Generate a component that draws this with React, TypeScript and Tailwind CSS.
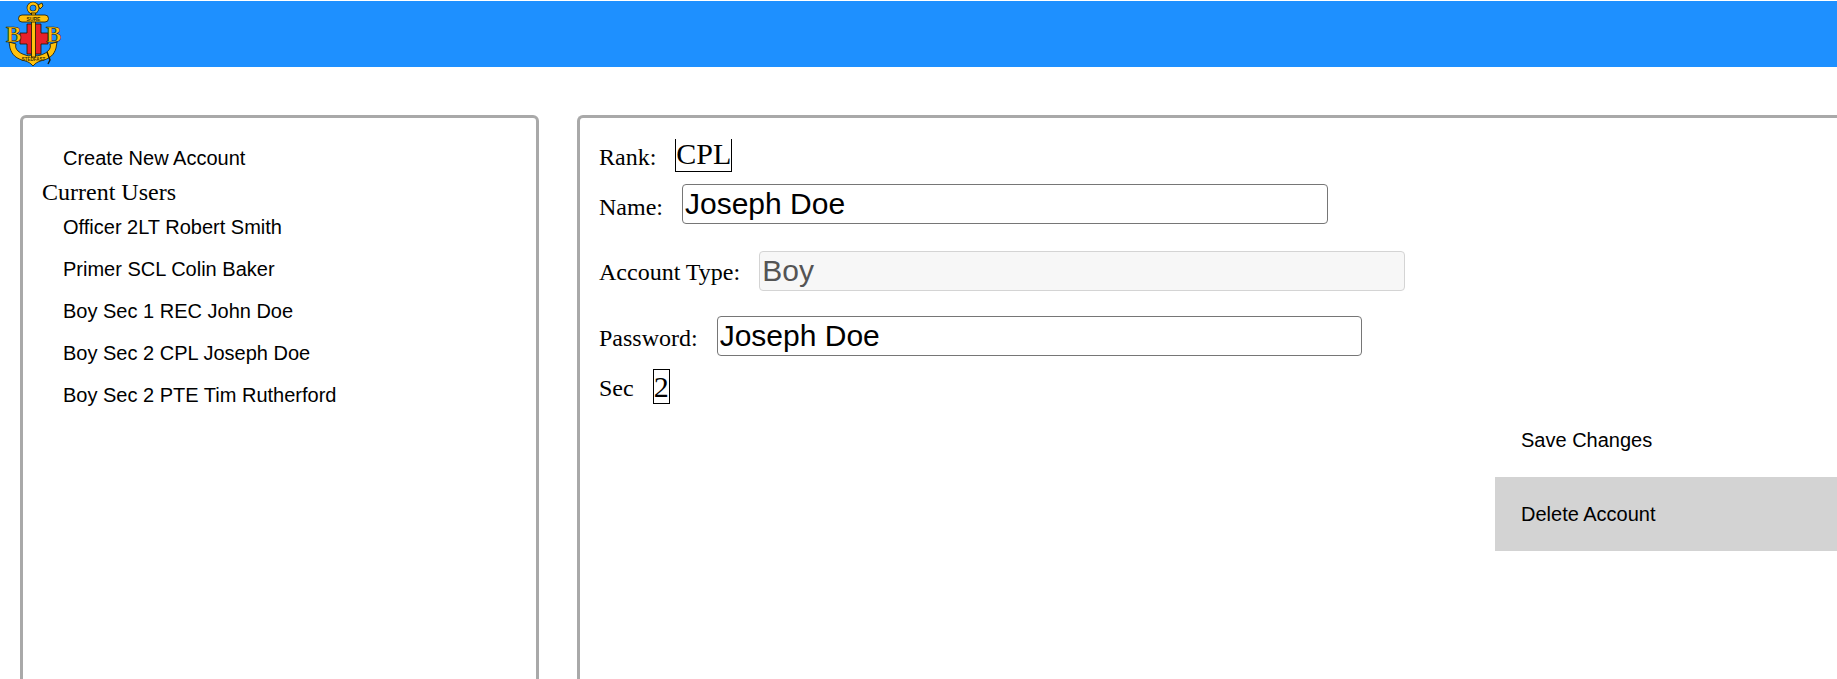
const users = [
  "Officer 2LT Robert Smith",
  "Primer SCL Colin Baker",
  "Boy Sec 1 REC John Doe",
  "Boy Sec 2 CPL Joseph Doe",
  "Boy Sec 2 PTE Tim Rutherford",
];

function Logo() {
  return (
    <svg viewBox="0 0 68 66" className="h-[66px] w-[68px] shrink-0">
      <g stroke="#1a1400" strokeWidth="0.8">
        <circle cx="33" cy="7" r="4.5" fill="none" stroke="#1a1400" strokeWidth="3.6" />
        <circle cx="33" cy="7" r="4.5" fill="none" stroke="#ffc20e" strokeWidth="2.4" />
        <path d="M38 4l4-2 1 3-3 3z" fill="#ffc20e" />
        <path d="M9 41l7 2c-1 3 0 5 2 7 3 3 7 4 11 5l4-2 4 2c4-1 8-2 11-5 2-2 3-4 2-7l7-2-1 6c-2 7-6 10-12 12-4 1-7 2-9 4l-2 2-2-2c-2-2-5-3-9-4-6-2-10-5-12-12z" fill="#ffc20e" />
        <path d="M27 23h14v9h7v11h-7v10H27V43h-7V32h7z" fill="#e8202a" />
        <rect x="31.5" y="12" width="4" height="44" fill="#ffc20e" />
        <rect x="18.5" y="14" width="30" height="7" rx="3.5" fill="#ffc20e" />
        <path d="M47 51l3 8-2 4" fill="none" strokeWidth="1.4" />
      </g>
      <text x="33.5" y="19.5" textAnchor="middle" fontFamily="Liberation Sans, sans-serif" fontWeight="700" fontSize="5" fill="#3a2a00">SURE</text>
      <text x="33.5" y="60" textAnchor="middle" fontFamily="Liberation Sans, sans-serif" fontWeight="700" fontSize="4.5" fill="#3a2a00">STEDFAST</text>
      <text x="6" y="41" fontFamily="Liberation Serif, serif" fontWeight="700" fontSize="23" fill="#ffc20e" stroke="#1a1400" strokeWidth="0.6">B</text>
      <text x="46" y="41" fontFamily="Liberation Serif, serif" fontWeight="700" fontSize="23" fill="#ffc20e" stroke="#1a1400" strokeWidth="0.6">B</text>
    </svg>
  );
}

function Field({ label, value, inputClass, labelClass, disabled }: { label: string; value: string; inputClass: string; labelClass: string; disabled?: boolean }) {
  return (
    <div className="flex items-center">
      <span className={`text-[24px] ${labelClass}`}>{label}</span>
      <input
        readOnly
        disabled={disabled}
        value={value}
        className={`ml-[19px] h-10 rounded-[4px] border px-[2px] pb-[2px] font-['Liberation_Sans',sans-serif] text-[30px] ${inputClass}`}
      />
    </div>
  );
}

export default function App() {
  return (
    <div className="h-[679px] overflow-hidden bg-white pt-px font-['Liberation_Serif',serif] text-black">
      <header className="flex h-[66px] items-center bg-[#1e90ff]">
        <Logo />
      </header>
      <main className="flex items-start pt-[48px]">
        <aside className="ml-5 h-[600px] w-[519px] shrink-0 rounded-t-[6px] border-[3px] border-[#a9a9a9] pl-[19px] pt-[23px]">
          <div className="pl-[21px] font-['Liberation_Sans',sans-serif] text-[20px] leading-[34px]">Create New Account</div>
          <div className="translate-y-[2px] text-[24px] leading-[31px]">Current Users</div>
          <ul className="font-['Liberation_Sans',sans-serif] text-[20px]">
            {users.map((user) => (
              <li key={user} className="h-[42px] pl-[21px] leading-[42px]">{user}</li>
            ))}
          </ul>
        </aside>
        <section className="ml-[38px] h-[600px] flex-1 rounded-tl-[6px] border-y-[3px] border-l-[3px] border-[#a9a9a9] pl-[19px] pt-[19px]">
          <div className="flex items-center">
            <span className="translate-y-[2px] text-[24px]">Rank:</span>
            <span className="ml-[19px] border border-t-0 border-black pb-[2px] text-[30px] leading-[30px]">CPL</span>
          </div>
          <div className="mt-[11px]">
            <Field label="Name:" value="Joseph Doe" labelClass="translate-y-[3px]" inputClass="w-[646px] border-[#767676]" />
          </div>
          <div className="mt-[27px]">
            <Field label="Account Type:" value="Boy" labelClass="translate-y-px" disabled inputClass="w-[646px] border-[#d4d4d4] bg-[#f7f7f7] text-[#545454]" />
          </div>
          <div className="mt-[25px]">
            <Field label="Password:" value="Joseph Doe" labelClass="translate-y-[2px]" inputClass="w-[645px] border-[#767676]" />
          </div>
          <div className="mt-3 flex items-center">
            <span className="translate-y-[2px] text-[24px]">Sec</span>
            <span className="ml-[19px] border border-black text-[30px] leading-[33px]">2</span>
          </div>
          <div className="ml-auto -mt-px w-[342px] font-['Liberation_Sans',sans-serif] text-[20px]">
            <div className="flex h-[74px] items-center px-[26px]">Save Changes</div>
            <div className="flex h-[74px] items-center bg-[#d3d3d3] px-[26px]">Delete Account</div>
          </div>
        </section>
      </main>
    </div>
  );
}
